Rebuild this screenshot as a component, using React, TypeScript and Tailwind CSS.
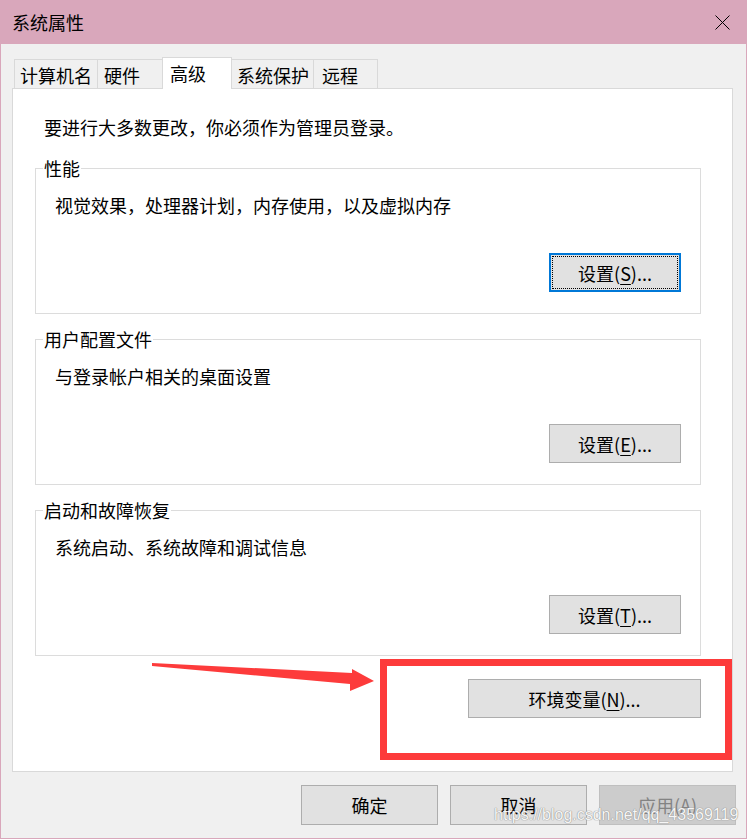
import React from 'react';

const FONT = "font-['Noto_Sans_CJK_SC','Noto_Sans',sans-serif]";

const tabs = [
  { label: '计算机名', w: 'w-[84px]', pl: 'pl-[5px]' },
  { label: '硬件', w: 'w-[66px]', pl: 'pl-[6px]' },
  { label: '高级', w: 'w-[70px]', pl: 'pl-[7px]', active: true },
  { label: '系统保护', w: 'w-[83px]', pl: 'pl-[5px]' },
  { label: '远程', w: 'w-[65px]', pl: 'pl-[8px]' },
];

const Key: React.FC<{ k: string }> = ({ k }) => (
  <>
    (<span className="underline underline-offset-[3px]">{k}</span>)...
  </>
);

interface GroupProps {
  title: string;
  text: string;
  hotkey: string;
  focused?: boolean;
  className?: string;
}

const Group: React.FC<GroupProps> = ({ title, text, hotkey, focused, className }) => (
  <fieldset className={`ml-[22px] w-[666px] border border-[#DCDCDC] ${className ?? ''}`}>
    <legend className="ml-[7px] px-[1px] leading-[20px]">{title}</legend>
    <div className="pt-[15px] px-[19px] pb-[21px]">
      <p className="leading-[24px]">{text}</p>
      <div className="mt-[36px] flex justify-end">
        {focused ? (
          <button className="w-[132px] h-[39px] bg-[#E1E1E1] border-2 border-[#0078D7] outline-1 outline-dotted outline-black outline-offset-[-4px] leading-none">
            设置<Key k={hotkey} />
          </button>
        ) : (
          <button className="w-[132px] h-[39px] bg-[#E1E1E1] border border-[#ADADAD] leading-none">
            设置<Key k={hotkey} />
          </button>
        )}
      </div>
    </div>
  </fieldset>
);

export default function App() {
  return (
    <div className={`relative w-[747px] h-[839px] flex flex-col bg-[#F0F0F0] border-x border-b border-[#D9A7BB] text-[18px] text-black ${FONT}`}>
      {/* title bar */}
      <div className="h-[44px] shrink-0 bg-[#D9A7BB] flex items-center justify-between pl-[11px] pr-[16px]">
        <span className="leading-[24px]">系统属性</span>
        <svg width="15" height="15" viewBox="0 0 15 15">
          <path d="M0.5 0.5 L14.5 14.5 M14.5 0.5 L0.5 14.5" stroke="#000" strokeWidth="1" />
        </svg>
      </div>

      <div className="pl-[11px] pt-[13px]">
        {/* tabs */}
        <div className="flex items-end ml-[2px]">
          {tabs.map((t, i) =>
            t.active ? (
              <div
                key={t.label}
                className={`relative z-10 ${t.w} ${t.pl} h-[32px] -mb-px -ml-px bg-white border-x border-t border-[#D9D9D9] pt-[2px] leading-[26px]`}
              >
                {t.label}
              </div>
            ) : (
              <div
                key={t.label}
                className={`${t.w} ${t.pl} h-[29px] ${i > 0 ? '-ml-px' : ''} bg-[#F0F0F0] border-x border-t border-[#D9D9D9] pt-[2px] leading-[26px]`}
              >
                {t.label}
              </div>
            )
          )}
        </div>

        {/* panel */}
        <div className="w-[721px] h-[684px] border border-[#D9D9D9] bg-white">
          <p className="mt-[26px] ml-[31px] leading-[24px]">要进行大多数更改，你必须作为管理员登录。</p>
          <Group className="mt-[19px]" title="性能" text="视觉效果，处理器计划，内存使用，以及虚拟内存" hotkey="S" focused />
          <Group className="mt-[15px]" title="用户配置文件" text="与登录帐户相关的桌面设置" hotkey="E" />
          <Group className="mt-[15px]" title="启动和故障恢复" text="系统启动、系统故障和调试信息" hotkey="T" />

          <div className="flex items-start mt-[3px]">
            <svg className="ml-[137px] shrink-0" width="230" height="40" viewBox="0 0 230 40">
              <polygon points="2,4 202,14 202,10 224,22 200,32 200,25 2,7" fill="#FD3B3B" />
            </svg>
            <div className="w-[352px] h-[101px] border-[7px] border-[#FD3B3B] pt-[13px] pl-[81px]">
              <button className="w-[233px] h-[39px] bg-[#E1E1E1] border border-[#ADADAD] leading-none">
                环境变量<Key k="N" />
              </button>
            </div>
          </div>
        </div>
      </div>

      {/* dialog buttons */}
      <div className="mt-[13px] flex justify-end gap-[12px] pr-[10px]">
        <button className="w-[137px] h-[40px] bg-[#E1E1E1] border border-[#ADADAD]">确定</button>
        <button className="w-[137px] h-[40px] bg-[#E1E1E1] border border-[#ADADAD]">取消</button>
        <button className="w-[137px] h-[40px] bg-[#CCCCCC] border border-[#BFBFBF] text-[#838383]">
          应用(A)
        </button>
      </div>

      {/* csdn watermark over the bottom-right corner */}
      <span className="absolute left-[493px] top-[803px] whitespace-nowrap text-[16px] leading-[24px] font-['Liberation_Sans',sans-serif] text-[#F6F6F6] [text-shadow:0_0_1px_#8A8A8A,0_0_1px_#8A8A8A]">
        https://blog.csdn.net/qq_43569119
      </span>
    </div>
  );
}
